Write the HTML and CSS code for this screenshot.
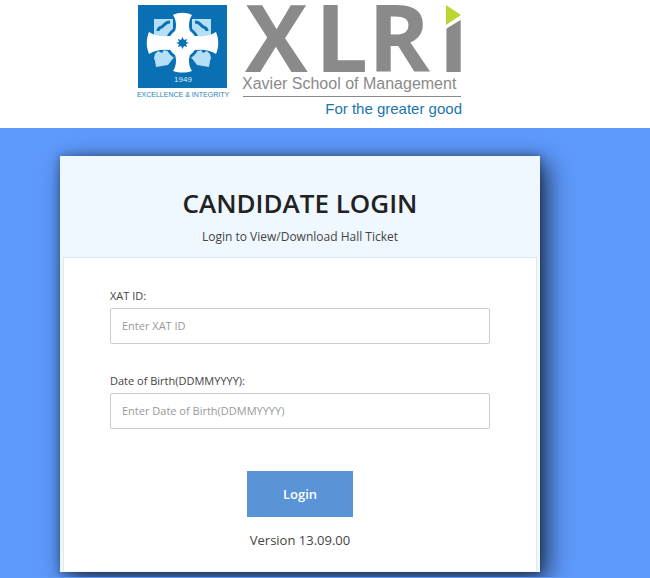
FILE: index.html
```
<!DOCTYPE html>
<html lang="en">

<head>
    <meta charset="UTF-8">
    <meta name="viewport" content="width=device-width, initial-scale=1.0">
    <title>Candidate Login</title>
    <link rel="stylesheet" href="styles.css">
</head>

<body>
    <header class="site-header">
        <svg class="logo" width="326" height="120" viewBox="137 0 326 120" role="img" aria-label="XLRI Xavier School of Management">
            <!-- emblem -->
            <rect x="138" y="5" width="89" height="83" fill="#0870b3" />
            <g fill="#b5def7">
                <path d="M154 19h19v18h-19z" />
                <path d="M192 19h19v18h-19z" />
                <path d="M155 54l3-3 4 2 2-3 3 1 2-2 8 5-6 7-3 4-12 2-1-6-1-3z" />
                <path d="M210 54l-3-3-4 2-2-3-3 1-2-2-8 5 6 7 3 4 12 2 1-6 1-3z" />
            </g>
            <g fill="none" stroke="#0870b3" stroke-width="3">
                <path d="M158 31c0-4 3-3 5-5s3-4 7-4" />
                <path d="M207 31c0-4-3-3-5-5s-3-4-7-4" />
            </g>
            <circle cx="182.500" cy="43" r="17" fill="#0870b3" />
            <g fill="#fff">
                <circle cx="182.500" cy="43" r="14" />
                <path d="M173 15c6-3 13-3 19 0-4 6-4 14 0 21h-19c4-7 4-15 0-21z" />
                <path d="M173 71c6 2 13 2 19 0-4-6-4-14 0-21h-19c4 7 4 15 0 21z" />
                <path d="M149 32c-3 7-3 15 0 22 8-5 17-5 26-3v-16c-9 2-18 2-26-3z" />
                <path d="M216 32c3 7 3 15 0 22-8-5-17-5-26-3v-16c9 2 18 2 26-3z" />
            </g>
            <path d="M182.500 37l1.500 3 3-1-1 3 3 1-3 1 1 3-3-1-1.500 3-1.500-3-3 1 1-3-3-1 3-1-1-3 3 1z" fill="#0870b3" />
            <text class="logo-year" x="183" y="82" text-anchor="middle">1949</text>
            <text class="logo-motto" x="183" y="97" text-anchor="middle">EXCELLENCE &amp; INTEGRITY</text>

            <!-- wordmark -->
            <text class="logo-name" x="245 315 368 438" y="72">XLRI</text>
            <path d="M444 0h20v18l-20 12z" fill="#fff" />
            <path d="M446 5l15 10-15 10z" fill="#bcd631" />
            <text class="logo-school" x="242" y="89">Xavier School of Management</text>
            <path d="M243 96.500h218" stroke="#8a8a8a" />
            <text class="logo-tagline" x="462" y="114" text-anchor="end">For the greater good</text>
        </svg>
    </header>

    <main class="content">
        <div class="login-card">
            <div class="login-head">
                <h1>CANDIDATE LOGIN</h1>
                <p>Login to View/Download Hall Ticket</p>
            </div>
            <form class="login-form" id="login-form">
                <div class="form-group">
                    <label for="xat-id">XAT ID:</label>
                    <input type="text" id="xat-id" name="xat-id" placeholder="Enter XAT ID">
                </div>
                <div class="form-group">
                    <label for="dob">Date of Birth(DDMMYYYY):</label>
                    <input type="text" id="dob" name="dob" placeholder="Enter Date of Birth(DDMMYYYY)">
                </div>
                <button type="submit" class="btn-login">Login</button>
                <p class="version">Version 13.09.00</p>
            </form>
        </div>
    </main>
</body>

</html>
```
FILE: styles.css
```
* {
    box-sizing: border-box;
}

body {
    font-family: "Open Sans", sans-serif;
    background-color: #5e9afc;
    color: #444;
    margin: 0;
}

h1,
p {
    margin: 0;
}

.site-header {
    display: flex;
    justify-content: center;
    padding: 0 50px 8px 0;
    background-color: #fff;
}

.logo {
    display: block;
    font-family: "Liberation Sans", Arial, sans-serif;
}

.logo-year {
    font-size: 8px;
    fill: #d5ecfa;
}

.logo-motto {
    font-size: 7px;
    fill: #2a7fb8;
}

.logo-name {
    font-family: "Open Sans", sans-serif;
    font-size: 94px;
    font-weight: bold;
    fill: #8a8a8a;
}

.logo-school {
    font-size: 16px;
    fill: #8a8a8a;
}

.logo-tagline {
    font-size: 15px;
    fill: #1b75ac;
}

.content {
    padding: 28px 110px 5px 60px;
}

.login-card {
    max-width: 720px;
    margin: 0 auto;
    padding: 3px 3px 1px;
    background-color: #eff7ff;
    box-shadow: 7px 7px 24px rgba(0, 0, 0, 0.7), 0 0 8px rgba(0, 0, 0, 0.3);
}

.login-head {
    padding: 26px 20px 11px;
    text-align: center;
}

.login-head h1 {
    font-size: 26px;
    line-height: 36px;
    font-weight: 600;
    color: #222;
}

.login-head p {
    margin-top: 7px;
    font-size: 12px;
    line-height: 18px;
}

.login-form {
    padding: 29px 46px 20px;
    border: 1px solid #dcebf0;
    border-bottom: none;
    background-color: #fff;
    text-align: center;
}

.form-group {
    margin-bottom: 28px;
    text-align: left;
}

.form-group label {
    display: block;
    margin-bottom: 3px;
    font-size: 11px;
    line-height: 18px;
}

.form-group input {
    display: block;
    width: 100%;
    height: 36px;
    padding: 0 11px 2px;
    border: 1px solid #ccc;
    border-radius: 2px;
    background-color: #fff;
    font-family: inherit;
    font-size: 11px;
    color: #444;
}

.form-group input::placeholder {
    color: #999;
}

.btn-login {
    display: block;
    width: 106px;
    height: 46px;
    margin: 42px auto 0;
    border: none;
    background-color: #5994d6;
    color: #fff;
    font-family: inherit;
    font-size: 13px;
    font-weight: 600;
    cursor: pointer;
}

.btn-login:hover {
    background-color: #4783c6;
}

.version {
    margin-top: 12px;
    font-size: 13px;
    line-height: 22px;
}
```
